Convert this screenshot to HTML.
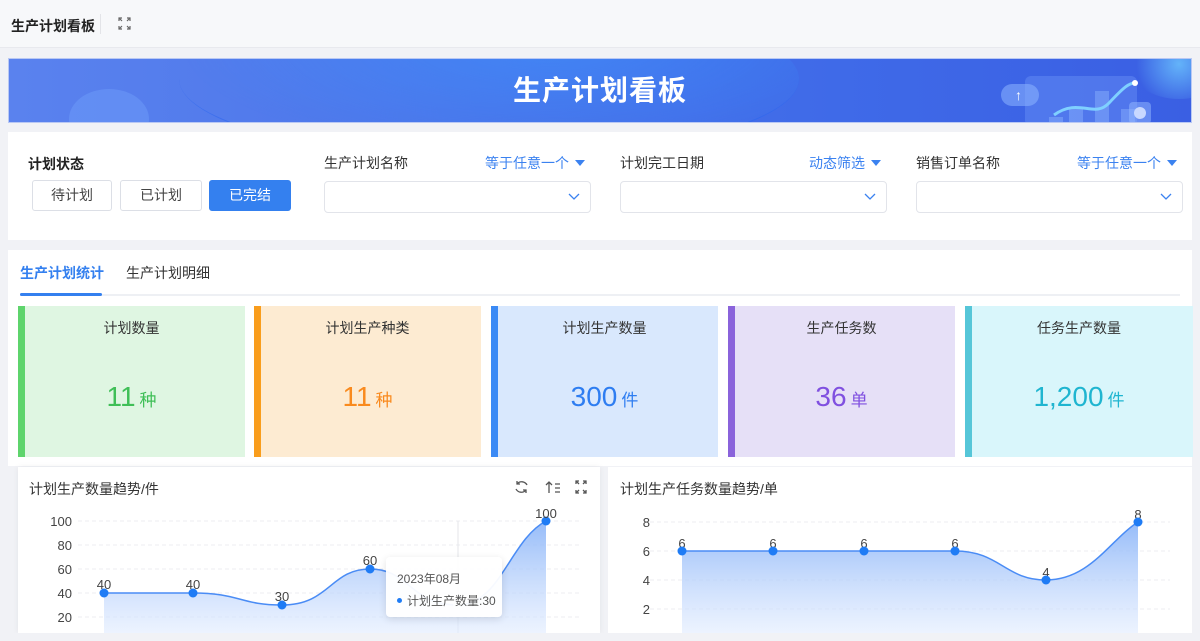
<!DOCTYPE html>
<html><head><meta charset="utf-8">
<style>
*{box-sizing:border-box;margin:0;padding:0}
body{width:1200px;height:641px;overflow:hidden;background:#f1f2f6;font-family:"Liberation Sans","Noto Sans CJK SC",sans-serif;color:#333;position:relative}
.abs{position:absolute}
.top{left:0;top:0;width:1200px;height:48px;background:#f7f8fa;border-bottom:1px solid #e8e9ee}
.banner{left:8px;top:58px;width:1184px;height:65px;background:linear-gradient(90deg,#5a82ee 0%,#4a74ea 40%,#3f6ae8 70%,#3a5fe3 100%);overflow:hidden;border:1px solid #b9c8f4}
.white{background:#fff}
.btn{position:absolute;top:180px;height:31px;border:1px solid #dcdfe6;border-radius:3px;font-size:14px;line-height:29px;text-align:center;background:#fff;color:#444}
.lbl{position:absolute;top:153px;font-size:14px;color:#333}
.op{position:absolute;top:153px;font-size:14px;color:#3b82f0}
.op:after{content:"";display:inline-block;margin-left:6px;border-left:5px solid transparent;border-right:5px solid transparent;border-top:6px solid #3b82f0;vertical-align:2px}
.sel{position:absolute;top:181px;height:32px;width:267px;border:1px solid #e2e4ea;border-radius:4px;background:#fff}
.sel svg{position:absolute;right:10px;top:11px}
.card{position:absolute;top:306px;height:151px;width:227px;text-align:center}
.card .t{position:absolute;top:12px;left:0;right:0;font-size:14px;color:#333}
.card .v{position:absolute;top:75px;left:0;right:0;font-size:28px}
.card .v span{font-size:17px;margin-left:4px}
.card i{position:absolute;left:0;top:0;bottom:0;width:7px}
</style></head><body>
<div class="abs top"></div>
<div class="abs" style="left:11px;top:16px;font-size:14px;font-weight:bold;color:#222">生产计划看板</div>
<div class="abs" style="left:100px;top:14px;width:1px;height:20px;background:#e3e4e8"></div>
<svg class="abs" style="left:118px;top:17px" width="13" height="13" viewBox="0 0 13 13" fill="none" stroke="#666" stroke-width="1.2"><path d="M1 4V1h3M1 1l3 3M9 1h3v3M12 1L9 4M1 9v3h3M1 12l3-3M12 9v3H9M12 12L9 9"/></svg>

<div class="abs banner">
<div class="abs" style="left:170px;top:-60px;width:620px;height:160px;border-radius:50%;background:radial-gradient(ellipse at 60% 30%,rgba(60,150,255,.5),rgba(60,110,240,0) 70%);border-bottom:2px solid rgba(40,100,240,.5)"></div>
<div class="abs" style="left:60px;top:30px;width:80px;height:60px;border-radius:50%;background:rgba(120,170,255,.35)"></div>
<div class="abs" style="left:1120px;top:-30px;width:100px;height:70px;border-radius:50%;background:radial-gradient(circle,rgba(110,200,255,.8),rgba(60,110,240,0) 70%)"></div>
<div class="abs" style="left:0;right:0;top:10px;text-align:center;font-size:28px;font-weight:bold;color:#fff;letter-spacing:1px">生产计划看板</div>
<div class="abs" style="left:1016px;top:17px;width:112px;height:50px;border-radius:6px;background:rgba(130,170,255,.3)"></div>
<div class="abs" style="left:992px;top:25px;width:38px;height:22px;border-radius:11px;background:rgba(140,180,255,.55)"></div>
<div class="abs" style="left:1006px;top:28px;color:#fff;font-size:14px;font-weight:bold">↑</div>
<svg class="abs" style="left:1030px;top:20px" width="110" height="45"><g fill="rgba(140,180,255,.45)"><rect x="10" y="38" width="14" height="8"/><rect x="30" y="28" width="14" height="18"/><rect x="56" y="12" width="14" height="34"/><rect x="82" y="30" width="14" height="16"/></g><path d="M15 36C40 18 55 40 70 24S90 4 96 4" stroke="#7fd0ff" stroke-width="3" fill="none"/><circle cx="96" cy="4" r="3" fill="#fff"/></svg>
<div class="abs" style="left:1120px;top:43px;width:22px;height:22px;border-radius:4px;background:rgba(150,185,255,.5)"></div>
<div class="abs" style="left:1125px;top:48px;width:12px;height:12px;border-radius:50%;background:#c8d8ff"></div>
</div>

<div class="abs white" style="left:8px;top:132px;width:1184px;height:108px"></div>
<div class="abs" style="left:28px;top:154px;font-size:14px;font-weight:bold;color:#222">计划状态</div>
<div class="btn" style="left:32px;width:80px">待计划</div>
<div class="btn" style="left:120px;width:82px">已计划</div>
<div class="btn" style="left:209px;width:82px;background:#3480ef;border-color:#3480ef;color:#fff">已完结</div>
<div class="lbl" style="left:324px">生产计划名称</div><div class="op" style="left:485px">等于任意一个</div>
<div class="lbl" style="left:620px">计划完工日期</div><div class="op" style="left:809px">动态筛选</div>
<div class="lbl" style="left:916px">销售订单名称</div><div class="op" style="left:1077px">等于任意一个</div>
<div class="sel" style="left:324px"><svg width="12" height="8"><path d="M1 1l5 5 5-5" stroke="#3b82f0" fill="none" stroke-width="1.3"/></svg></div>
<div class="sel" style="left:620px"><svg width="12" height="8"><path d="M1 1l5 5 5-5" stroke="#3b82f0" fill="none" stroke-width="1.3"/></svg></div>
<div class="sel" style="left:916px"><svg width="12" height="8"><path d="M1 1l5 5 5-5" stroke="#3b82f0" fill="none" stroke-width="1.3"/></svg></div>

<div class="abs white" style="left:8px;top:250px;width:1184px;height:216px"></div>
<div class="abs" style="left:20px;top:263px;font-size:14px;font-weight:bold;color:#3480ef">生产计划统计</div>
<div class="abs" style="left:126px;top:263px;font-size:14px;color:#333">生产计划明细</div>
<div class="abs" style="left:20px;top:294px;width:1160px;height:2px;background:#eef0f4"></div>
<div class="abs" style="left:20px;top:293px;width:82px;height:3px;background:#3480ef;border-radius:2px"></div>

<div class="card" style="left:18px;background:#dff6e2"><i style="background:#5ed46c"></i><div class="t">计划数量</div><div class="v" style="color:#3fbf57">11<span>种</span></div></div>
<div class="card" style="left:254px;background:#fdebd2"><i style="background:#f99d1c"></i><div class="t">计划生产种类</div><div class="v" style="color:#f98a1e">11<span>种</span></div></div>
<div class="card" style="left:491px;background:#d9e8fd"><i style="background:#3b8af5"></i><div class="t">计划生产数量</div><div class="v" style="color:#2e7df1">300<span>件</span></div></div>
<div class="card" style="left:728px;background:#e6e0f7"><i style="background:#8a63db"></i><div class="t">生产任务数</div><div class="v" style="color:#8050e0">36<span>单</span></div></div>
<div class="card" style="left:965px;width:228px;background:#d9f6fb"><i style="background:#56c6d8"></i><div class="t">任务生产数量</div><div class="v" style="color:#1fb5d0">1,200<span>件</span></div></div>

<div class="abs white" style="left:18px;top:467px;width:582px;height:166px;box-shadow:0 0 6px rgba(0,0,0,.06)"></div>
<div class="abs white" style="left:608px;top:467px;width:584px;height:166px"></div>
<div class="abs" style="left:29px;top:479px;font-size:14px;color:#333">计划生产数量趋势/件</div>
<div class="abs" style="left:620px;top:479px;font-size:14px;color:#333">计划生产任务数量趋势/单</div>
<svg class="abs" style="left:514px;top:479px" width="75" height="16" fill="none" stroke="#555" stroke-width="1.3"><path d="M13 6A6 6 0 0 0 3 5M2 10a6 6 0 0 0 10 1M3 2v3h3M12 14v-3H9"/><path d="M35 3v11M32 6l3-3 3 3M41 5h5M41 9h5M41 13h5"/><path d="M62 5V2h3M62 2l3 3M69 2h3v3M72 2l-3 3M62 11v3h3M62 14l3-3M72 11v3h-3M72 14l-3-3"/></svg>

<svg class="abs" style="left:0;top:0" width="1200" height="641" font-family="Liberation Sans,sans-serif" font-size="13">
<defs><linearGradient id="g" x1="0" y1="0" x2="0" y2="1"><stop offset="0" stop-color="#8ab4f8" stop-opacity=".9"/><stop offset="1" stop-color="#e6efff" stop-opacity=".6"/></linearGradient>
<clipPath id="c1"><rect x="18" y="467" width="582" height="166"/></clipPath><clipPath id="c2"><rect x="608" y="467" width="584" height="166"/></clipPath></defs>
<g stroke="#ececf0" stroke-dasharray="4 3"><path d="M78 521H580M78 545H580M78 569H580M78 593H580M78 617H580"/><path d="M650 522H1170M650 551H1170M650 580H1170M650 609H1170"/></g>
<g fill="#444" text-anchor="end"><text x="72" y="526">100</text><text x="72" y="550">80</text><text x="72" y="574">60</text><text x="72" y="598">40</text><text x="72" y="622">20</text>
<text x="650" y="527">8</text><text x="650" y="556">6</text><text x="650" y="585">4</text><text x="650" y="614">2</text></g>
<path d="M458 521V633" stroke="#e4e6ea"/>
<g clip-path="url(#c1)"><path d="M104 593C150 593 150 593 193 593C240 593 240 605 282 605C330 605 330 569 370 569C410 569 410 605 458 605C500 605 510 540 546 521V640H104Z" fill="url(#g)"/>
<path d="M104 593C150 593 150 593 193 593C240 593 240 605 282 605C330 605 330 569 370 569C410 569 410 605 458 605C500 605 510 540 546 521" stroke="#4a8cf5" stroke-width="1.5" fill="none"/></g>
<g fill="#1f7cf5"><circle cx="104" cy="593" r="4.5"/><circle cx="193" cy="593" r="4.5"/><circle cx="282" cy="605" r="4.5"/><circle cx="370" cy="569" r="4.5"/><circle cx="546" cy="521" r="4.5"/></g>
<circle cx="458" cy="605" r="5" fill="#e8f0ff"/>
<g fill="#444" text-anchor="middle"><text x="104" y="589">40</text><text x="193" y="589">40</text><text x="282" y="601">30</text><text x="370" y="565">60</text><text x="546" y="518">100</text>
<text x="682" y="548">6</text><text x="773" y="548">6</text><text x="864" y="548">6</text><text x="955" y="548">6</text><text x="1046" y="577">4</text><text x="1138" y="519">8</text></g>
<g clip-path="url(#c2)"><path d="M682 551H955C1000 551 1005 580 1046 580C1090 580 1110 540 1138 522V640H682Z" fill="url(#g)"/>
<path d="M682 551H955C1000 551 1005 580 1046 580C1090 580 1110 540 1138 522" stroke="#4a8cf5" stroke-width="1.5" fill="none"/></g>
<g fill="#1f7cf5"><circle cx="682" cy="551" r="4.5"/><circle cx="773" cy="551" r="4.5"/><circle cx="864" cy="551" r="4.5"/><circle cx="955" cy="551" r="4.5"/><circle cx="1046" cy="580" r="4.5"/><circle cx="1138" cy="522" r="4.5"/></g>
</svg>
<div class="abs" style="left:386px;top:557px;width:116px;height:60px;background:rgba(255,255,255,.95);border-radius:4px;box-shadow:0 2px 8px rgba(0,0,0,.12);font-size:12px;color:#555;padding:11px 0 0 11px;line-height:22px">2023年08月<br><span style="display:inline-block;width:5px;height:5px;border-radius:50%;background:#1f7cf5;vertical-align:2px;margin-right:5px"></span>计划生产数量:30</div>
<div class="abs" style="left:0;top:633px;width:1200px;height:8px;background:#f1f2f6"></div>
</body></html>
